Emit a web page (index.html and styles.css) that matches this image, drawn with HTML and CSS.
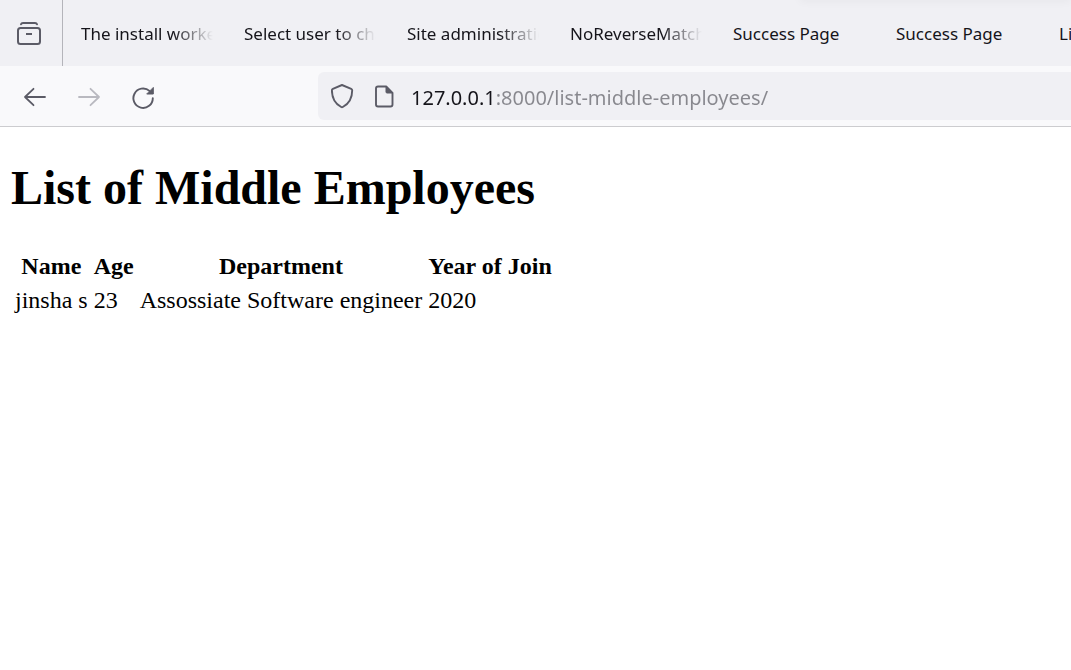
FILE: index.html
```html
<!DOCTYPE html>
<html lang="en">
<head>
<meta charset="utf-8">
<meta name="viewport" content="width=device-width, initial-scale=1">
<title>List of Middle Employees</title>
<link rel="stylesheet" href="styles.css">
</head>
<body>
<header class="browser">
  <div class="tab-strip">
    <button class="recent" type="button" aria-label="Recent browsing">
      <svg width="26" height="26" viewBox="0 0 26 26" fill="none" stroke="currentColor" stroke-width="2" stroke-linecap="round" stroke-linejoin="round">
        <path d="M5 4.200C5.400 3 6.200 3 7 3h12c.8 0 1.600 0 2 1.200"/>
        <rect x="2" y="8" width="22" height="16" rx="2.500"/>
        <path d="M11 14h4" stroke-linecap="square"/>
      </svg>
    </button>
    <nav class="tabs" aria-label="Open tabs">
      <button class="tab" type="button"><span class="tab-title fade">The install worker</span></button>
      <button class="tab" type="button"><span class="tab-title fade">Select user to change</span></button>
      <button class="tab" type="button"><span class="tab-title fade">Site administration</span></button>
      <button class="tab" type="button"><span class="tab-title fade">NoReverseMatch</span></button>
      <button class="tab" type="button"><span class="tab-title">Success Page</span></button>
      <button class="tab" type="button"><span class="tab-title">Success Page</span></button>
      <button class="tab" type="button"><span class="tab-title">List</span></button>
    </nav>
  </div>
  <div class="toolbar">
    <div class="nav-buttons">
      <button class="nav-button" type="button" aria-label="Back">
        <svg width="24" height="24" viewBox="0 0 24 24" fill="none" stroke="currentColor" stroke-width="1.800" stroke-linecap="round" stroke-linejoin="round"><path d="M22 12H2M10.500 3.800 2 12l8.500 8.200"/></svg>
      </button>
      <button class="nav-button" type="button" aria-label="Forward" disabled>
        <svg width="24" height="24" viewBox="0 0 24 24" fill="none" stroke="currentColor" stroke-width="1.800" stroke-linecap="round" stroke-linejoin="round"><path d="M2 12h20M13.500 3.800 22 12l-8.500 8.200"/></svg>
      </button>
      <button class="nav-button" type="button" aria-label="Reload">
        <svg width="24" height="24" viewBox="0 0 24 24" fill="none" stroke="currentColor" stroke-width="1.900" stroke-linecap="round"><path d="M21.800 13.200A9.700 9.700 0 1 1 18.500 5.900"/><path d="M22.300 2.800V9h-6.200z" fill="currentColor" stroke-width="1" stroke-linejoin="round"/></svg>
      </button>
    </div>
    <div class="address">
      <svg width="24" height="26" viewBox="0 0 24 26" fill="none" stroke="currentColor" stroke-width="1.900" stroke-linejoin="round"><path d="M11 2 20.200 5.800q1 .4 1 1.400C21.200 14.500 17.800 20.800 11.800 24q-.8.400-1.600 0C4.200 20.800.9 14.500.9 7.200q0-1 1-1.400z"/></svg>
      <svg width="24" height="26" viewBox="0 0 24 26" fill="none" stroke="currentColor" stroke-width="1.900" stroke-linejoin="round"><path d="M7 3.500h8.200l6.300 6.300v11.700a2 2 0 0 1-2 2H7a2 2 0 0 1-2-2v-16a2 2 0 0 1 2-2z"/><path d="M15 3.500 21.500 10H16a1 1 0 0 1-1-1z" fill="currentColor" stroke-width="1"/></svg>
      <input class="url" type="text" aria-label="Address" value="127.0.0.1:8000/list-middle-employees/" spellcheck="false">
    </div>
  </div>
</header>
<main class="page">
  <h1 class="title">List of Middle Employees</h1>
  <table class="employees">
    <thead><tr><th>Name</th><th>Age</th><th>Department</th><th>Year of Join</th></tr></thead>
    <tbody><tr><td>jinsha s</td><td>23</td><td>Assossiate Software engineer</td><td>2020</td></tr></tbody>
  </table>
</main>
</body>
</html>
```
FILE: styles.css
```css
* {
  box-sizing: border-box;
}

body {
  margin: 0;
  background: #fff;
  color: #000;
}

button {
  margin: 0;
  padding: 0;
  border: 0;
  background: none;
  font: inherit;
  color: inherit;
}

svg {
  display: block;
  flex: none;
}

.browser {
  font-family: "Noto Sans", "Open Sans", sans-serif;
  color: #5b5b66;
  background: #f9f9fb;
  border-bottom: 1px solid #cccccf;
}

.tab-strip {
  display: flex;
  height: 66px;
  background: #f0f0f4;
  overflow: hidden;
  position: relative;
}

.tab-strip::after {
  content: "";
  position: absolute;
  left: 800px;
  right: 0;
  bottom: 100%;
  height: 4px;
  box-shadow: 0 0 10px rgba(0, 0, 0, 0.08);
}

.recent {
  display: flex;
  flex: none;
  align-items: center;
  justify-content: center;
  width: 63px;
  padding-right: 4px;
  border-right: 1px solid #b4b4ba;
}

.tabs {
  display: flex;
  flex: 1;
  min-width: 0;
  overflow: hidden;
}

.tab {
  flex: none;
  width: 163px;
  padding: 0 13px 0 18px;
  color: #15141a;
  font-size: 17px;
  text-align: left;
}

.tab-title {
  display: block;
  overflow: hidden;
  white-space: nowrap;
}

.fade {
  mask-image: linear-gradient(to left, transparent, #000 40px);
}

.toolbar {
  display: flex;
  align-items: center;
  height: 60px;
  padding-left: 11px;
}

.nav-buttons {
  display: flex;
  gap: 6px;
  margin-right: 151px;
  padding-top: 2px;
}

.nav-button {
  display: grid;
  place-items: center;
  width: 48px;
  height: 48px;
}

.nav-button:disabled {
  color: #b9b9c0;
}

.address {
  display: flex;
  flex: 1;
  align-items: center;
  gap: 16px;
  height: 48px;
  padding-left: 13px;
  border-radius: 6px 0 0 6px;
  background: #f0f0f4;
}

.url {
  flex: 1;
  min-width: 0;
  padding: 3px 0 0;
  border: 0;
  outline: 0;
  font-family: "Noto Sans", "Open Sans", sans-serif;
  font-size: 20px;
  line-height: 30px;
  color: #88888e;
  background: linear-gradient(to right, #15141a 84px, #88888e 84px);
  background-clip: text;
  -webkit-text-fill-color: transparent;
}

.page {
  padding: 33px 11px 12px;
  font-family: "Liberation Serif", "Times New Roman", serif;
  font-size: 24px;
  line-height: 28px;
}

.title {
  margin: 0 0 32px;
  font-size: 48px;
  line-height: 56px;
}

.employees {
  border-spacing: 2px;
}

.employees th,
.employees td {
  padding: 2px;
}
```
